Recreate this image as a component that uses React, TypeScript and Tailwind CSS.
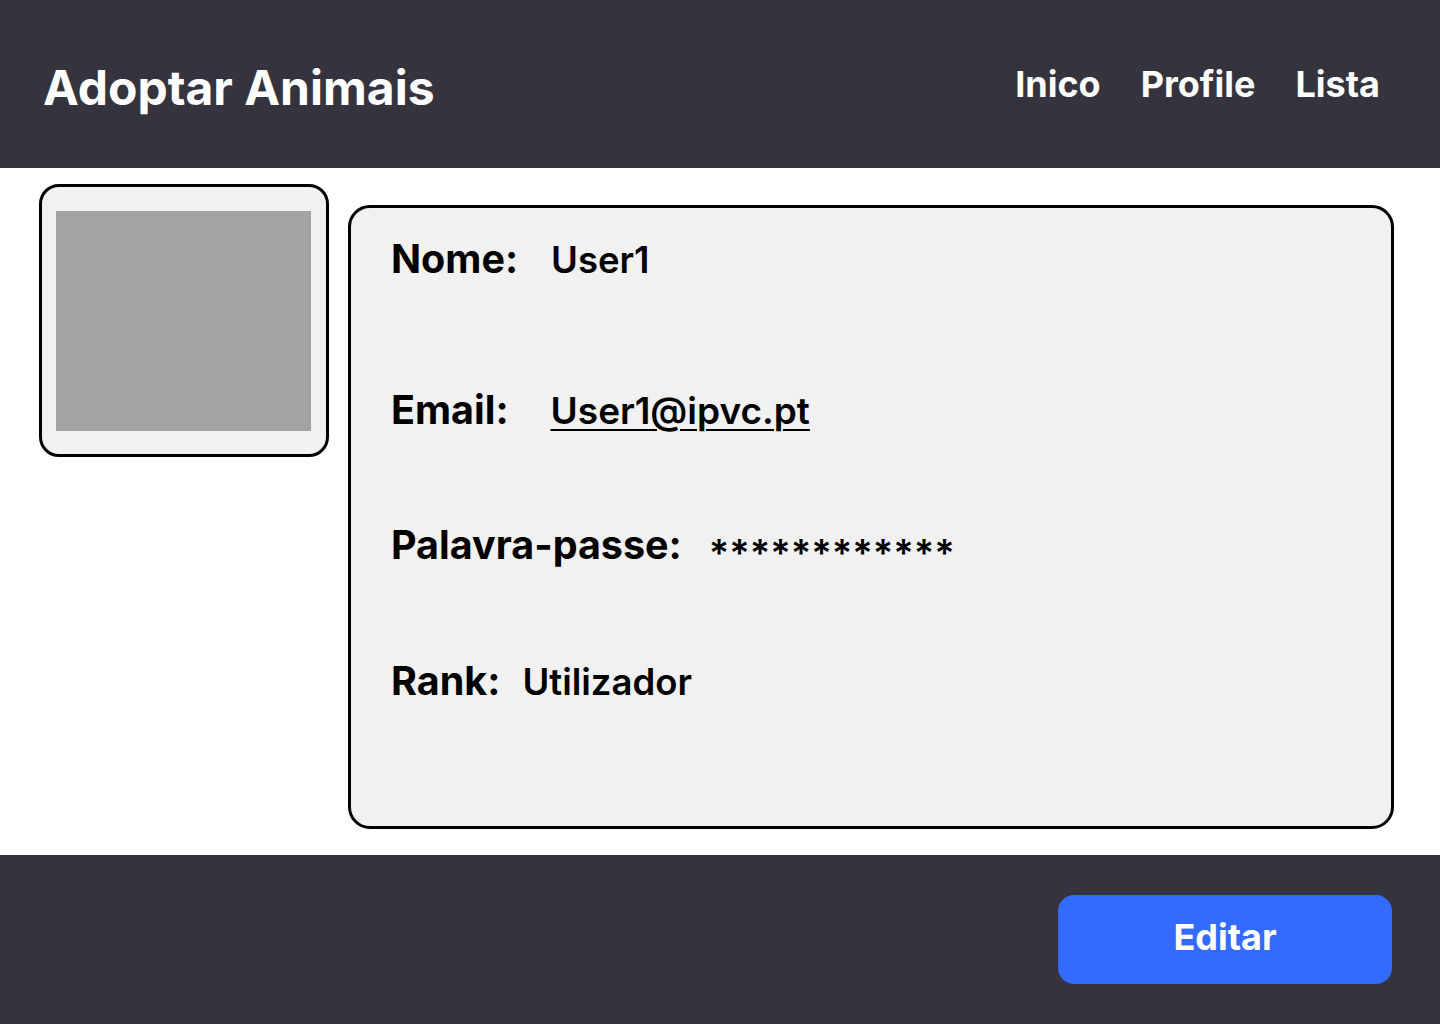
import React from "react";

export default function App() {
  const font = { fontFamily: "Inter, 'Noto Sans', sans-serif" };
  return (
    <div className="w-[1440px] h-[1024px] flex flex-col bg-white" style={font}>
      <header className="h-[168px] shrink-0 bg-[#35343e] flex items-center justify-between pl-[43px] pr-[60px]">
        <h1 className="text-[48px] leading-none font-bold text-white mt-[8px]">Adoptar Animais</h1>
        <nav className="flex items-center gap-[40px] text-[36px] leading-none font-bold text-white">
          <span>Inico</span>
          <span>Profile</span>
          <span>Lista</span>
        </nav>
      </header>
      <main className="flex-1 flex items-start pl-[39px] pr-[46px] gap-[19px]">
        <div className="mt-[16px] w-[290px] h-[273px] shrink-0 rounded-[20px] border-[3px] border-black bg-[#f1f1f1] pl-[14px] pt-[24px]">
          <div className="w-[255px] h-[220px] bg-[#a3a3a3]" />
        </div>
        <div className="mt-[37px] flex-1 h-[624px] rounded-[22px] border-[3px] border-black bg-[#f1f1f1] pl-[40px] pt-[32px] flex flex-col text-black">
          <div className="flex items-baseline leading-none">
            <span className="font-bold text-[39.5px]">Nome:</span>
            <span className="font-semibold text-[36.5px] ml-[33px]">User1</span>
          </div>
          <div className="flex items-baseline leading-none mt-[111px]">
            <span className="font-bold text-[39.5px]">Email:</span>
            <span className="font-semibold text-[37px] ml-[42px] underline decoration-[2px] underline-offset-[5px]">User1@ipvc.pt</span>
          </div>
          <div className="flex items-baseline leading-none mt-[96px]">
            <span className="font-bold text-[39.5px]">Palavra-passe:</span>
            <span className="font-semibold text-[38px] ml-[27px] translate-y-[8px]">************</span>
          </div>
          <div className="flex items-baseline leading-none mt-[96px]">
            <span className="font-bold text-[39.5px]">Rank:</span>
            <span className="font-semibold text-[36.5px] ml-[22px]">Utilizador</span>
          </div>
        </div>
      </main>
      <footer className="h-[169px] shrink-0 bg-[#35343e] flex items-center justify-end pr-[48px]">
        <button className="w-[334px] h-[89px] rounded-[16px] bg-[#336bff] text-white text-[36px] font-bold leading-none pb-[5px]">
          Editar
        </button>
      </footer>
    </div>
  );
}
